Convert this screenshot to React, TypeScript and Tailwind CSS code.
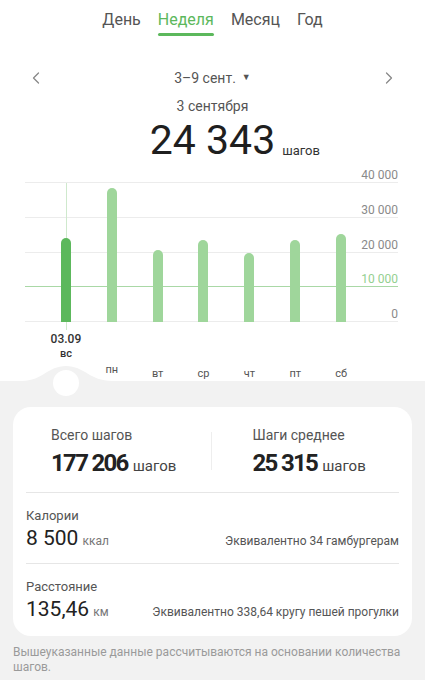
import { ChevronLeft, ChevronRight } from 'lucide-react'

const days = [
  { label: 'вс', h: 84 },
  { label: 'пн', h: 134 },
  { label: 'вт', h: 72 },
  { label: 'ср', h: 82 },
  { label: 'чт', h: 69 },
  { label: 'пт', h: 82 },
  { label: 'сб', h: 88 },
]

const gridLines = [
  { top: 0, label: '40 000' },
  { top: 35, label: '30 000' },
  { top: 70, label: '20 000' },
  { top: 104, label: '10 000', avg: true },
  { top: 139, label: '0' },
]

function Tabs() {
  const tabs = ['День', 'Неделя', 'Месяц', 'Год']
  return (
    <div className="flex h-[40px] items-center justify-center gap-[17px] text-[16px]">
      {tabs.map((t) => (
        <div key={t} className="relative flex h-full items-center">
          <span className={t === 'Неделя' ? 'text-[#5cb85c]' : 'text-[#555]'}>{t}</span>
          {t === 'Неделя' ? (
            <span className="absolute bottom-[4px] left-0 h-[3px] w-full rounded-full bg-[#5cb85c]" />
          ) : null}
        </div>
      ))}
    </div>
  )
}

function Chart() {
  return (
    <div className="relative mx-[25px] mt-[21px] h-[140px] w-[373px]">
      {gridLines.map((g) => (
        <div key={g.label} className="absolute left-0 right-0" style={{ top: g.top }}>
          <div className={g.avg ? 'h-px bg-[#a9d8a6]' : 'h-px bg-[#ececec]'} />
          <span
            className={
              'absolute bottom-[2px] right-0 text-[12px] leading-none ' +
              (g.avg ? 'text-[#94cf90]' : 'text-[#8a8a8a]')
            }
          >
            {g.label}
          </span>
        </div>
      ))}
      {/* selection line */}
      <div className="absolute left-[41px] top-[1px] h-[147px] w-px bg-[#cfe9cd]" />
      <div className="absolute bottom-0 left-[18px] grid h-full w-[321px] grid-cols-7 items-end">
        {days.map((d, i) => (
          <div key={d.label} className="flex justify-center">
            <div
              className={'w-[10px] rounded-t-full ' + (i === 0 ? 'bg-[#5cb85c]' : 'bg-[#9fd69b]')}
              style={{ height: d.h }}
            />
          </div>
        ))}
      </div>
    </div>
  )
}

function DayLabels() {
  return (
    <div className="ml-[43px] grid h-[60px] w-[321px] grid-cols-7">
      {days.map((d, i) =>
        i === 0 ? (
          <div key={d.label} className="flex flex-col items-center pt-[10px] text-[#333]">
            <span className="text-[12px] font-medium leading-[14px]">03.09</span>
            <span className="mt-[1px] text-[11px] font-medium leading-[14px]">вс</span>
          </div>
        ) : (
          <div
            key={d.label}
            className={
              'flex justify-center text-[11px] leading-[14px] text-[#555] ' +
              (i === 1 ? 'pt-[41px]' : 'pt-[45px]')
            }
          >
            {d.label}
          </div>
        )
      )}
    </div>
  )
}

function Bump() {
  return (
    <div className="pointer-events-none absolute left-0 top-[-16px] h-[40px] w-[140px]">
      <svg width="140" height="40" viewBox="0 0 140 40">
        <path d="M0 16 L22 16 C42 16 48 1 66 1 C84 1 90 16 112 16 L140 16 L140 40 L0 40 Z" fill="#f2f2f2" />
        <circle cx="66" cy="18" r="13" fill="#ffffff" />
      </svg>
    </div>
  )
}

function Stat({ label, value, unit }: { label: string; value: string; unit: string }) {
  return (
    <div>
      <div className="text-[14px] leading-[18px] text-[#555]">{label}</div>
      <div className="mt-[7px] flex items-baseline gap-[5px] leading-none">
        <span className="text-[24px] font-bold tracking-[-1.7px] text-[#222]">{value}</span>
        <span className="text-[15px] text-[#444]">{unit}</span>
      </div>
    </div>
  )
}

function Row({ label, value, unit, note }: { label: string; value: string; unit: string; note: string }) {
  return (
    <div className="px-[13px]">
      <div className="text-[13px] leading-[16px] text-[#555]">{label}</div>
      <div className="mt-[4px] flex items-baseline justify-between leading-none">
        <div className="flex items-baseline gap-[4px]">
          <span className="text-[21px] text-[#222]">{value}</span>
          <span className="text-[12px] text-[#777]">{unit}</span>
        </div>
        <span className="text-[12px] text-[#555]">{note}</span>
      </div>
    </div>
  )
}

export default function App() {
  return (
    <div className="min-h-[680px] w-full bg-[#f2f2f2] font-['Roboto',sans-serif]">
      <div className="h-[381px] bg-white">
        <Tabs />
        <div className="mt-[26px] flex h-[24px] items-center justify-between px-[26px] text-[#555]">
          <ChevronLeft size={20} strokeWidth={1.5} className="text-[#888]" />
          <div className="flex items-center gap-[6px] text-[14px]">
            <span>3–9 сент.</span>
            <span className="text-[9px]">▼</span>
          </div>
          <ChevronRight size={20} strokeWidth={1.5} className="text-[#888]" />
        </div>
        <div className="mt-[6px] text-center text-[14px] leading-[20px] text-[#555]">3 сентября</div>
        <div className="flex h-[45px] justify-center pt-[4px]">
          <div className="relative text-[41px] leading-none text-[#1f1f1f]">
            24 343
            <span className="absolute bottom-[4px] left-full ml-[7px] text-[13px] leading-none text-[#333]">
              шагов
            </span>
          </div>
        </div>
        <Chart />
        <DayLabels />
      </div>
      <div className="relative pt-[26px]">
        <Bump />
        <div className="mx-[13px] h-[229px] rounded-[18px] bg-white">
          <div className="flex pt-[19px]">
            <div className="flex-1 pl-[38px]">
              <Stat label="Всего шагов" value="177 206" unit="шагов" />
            </div>
            <div className="mt-[6px] h-[38px] w-px bg-[#eeeeee]" />
            <div className="flex-1 pl-[41px]">
              <Stat label="Шаги среднее" value="25 315" unit="шагов" />
            </div>
          </div>
          <div className="mx-[13px] mt-[17px] h-px bg-[#e6e6e6]" />
          <div className="pt-[15px]">
            <Row label="Калории" value="8 500" unit="ккал" note="Эквивалентно 34 гамбургерам" />
          </div>
          <div className="mx-[13px] mt-[14px] h-px bg-[#e6e6e6]" />
          <div className="pt-[15px]">
            <Row label="Расстояние" value="135,46" unit="км" note="Эквивалентно 338,64 кругу пешей прогулки" />
          </div>
        </div>
        <p className="px-[13px] pt-[9px] text-[12px] leading-[15px] text-[#9a9a9a]">
          Вышеуказанные данные рассчитываются на основании количества шагов.
        </p>
      </div>
    </div>
  )
}
